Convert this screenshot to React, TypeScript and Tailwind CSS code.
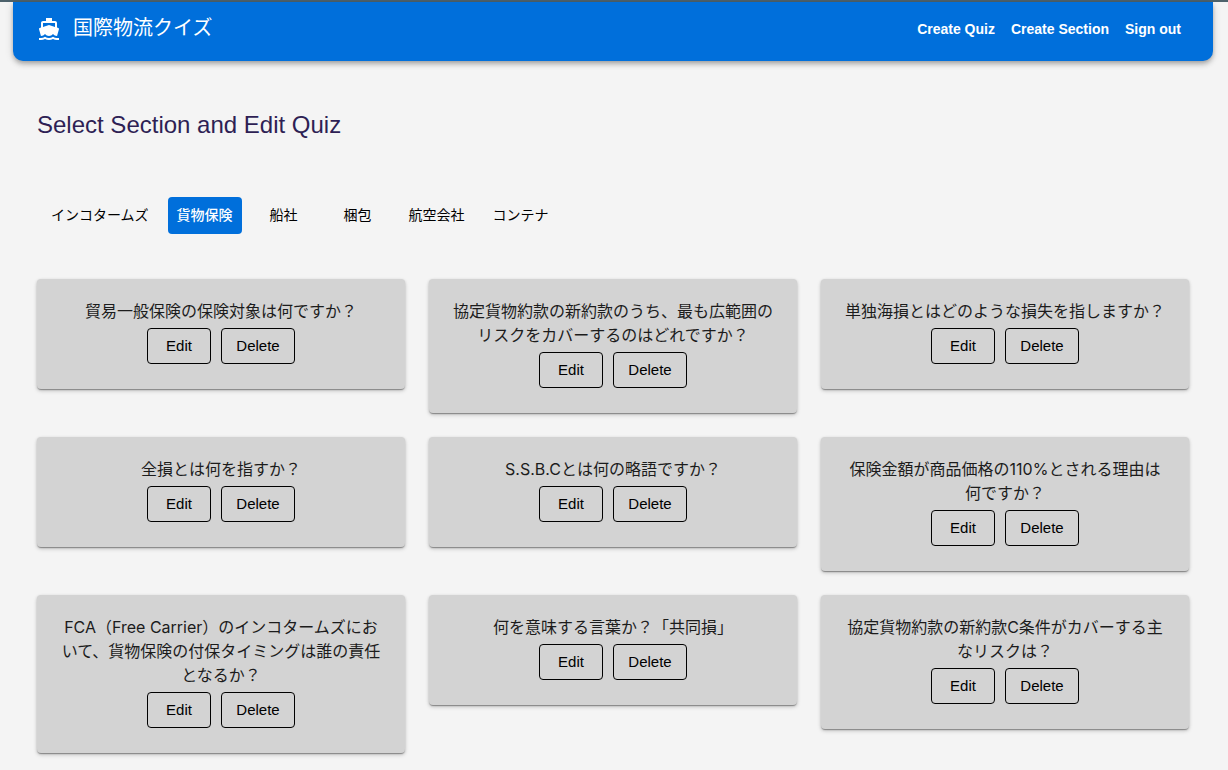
import { MdDirectionsBoat } from "react-icons/md";

const sections = ["インコタームズ", "貨物保険", "船社", "梱包", "航空会社", "コンテナ"];
const activeSection = "貨物保険";

const quizzes = [
  "貿易一般保険の保険対象は何ですか？",
  "協定貨物約款の新約款のうち、最も広範囲のリスクをカバーするのはどれですか？",
  "単独海損とはどのような損失を指しますか？",
  "全損とは何を指すか？",
  "S.S.B.Cとは何の略語ですか？",
  "保険金額が商品価格の110%とされる理由は何ですか？",
  "FCA（Free Carrier）のインコタームズにおいて、貨物保険の付保タイミングは誰の責任となるか？",
  "何を意味する言葉か？「共同損」",
  "協定貨物約款の新約款C条件がカバーする主なリスクは？",
];

function Header() {
  return (
    <header className="flex h-[59px] items-start justify-between rounded-b-[10px] bg-[#006fdb] pl-6 pr-8 text-white shadow-[0_2px_4px_-1px_rgba(0,0,0,0.2),0_4px_5px_rgba(0,0,0,0.14),0_1px_10px_rgba(0,0,0,0.12)]">
      <a href="#home" className="flex items-center gap-3 pt-3">
        <MdDirectionsBoat className="mt-[2px] size-6" aria-hidden="true" />
        <span className="text-xl leading-7">国際物流クイズ</span>
      </a>
      <nav className="flex gap-4 pt-[15px] text-sm leading-6 font-bold">
        <a href="#create-quiz">Create Quiz</a>
        <a href="#create-section">Create Section</a>
        <a href="#sign-out">Sign out</a>
      </nav>
    </header>
  );
}

function SectionTabs() {
  return (
    <div className="mt-14 flex flex-wrap gap-[10px] px-[5px]">
      {sections.map((name) => (
        <button
          key={name}
          type="button"
          aria-pressed={name === activeSection}
          className={
            name === activeSection
              ? "h-[37px] min-w-16 rounded bg-[#006fdb] px-[9px] pb-[2px] text-sm font-medium text-white"
              : "h-[37px] min-w-16 rounded px-[9px] pb-[2px] text-sm text-black"
          }
        >
          {name}
        </button>
      ))}
    </div>
  );
}

function QuizCard({ question }: { question: string }) {
  return (
    <article className="rounded bg-[#d3d3d3] px-6 pt-5 pb-[25px] text-center shadow-[0_2px_1px_-1px_rgba(0,0,0,0.2),0_1px_1px_rgba(0,0,0,0.14),0_1px_3px_rgba(0,0,0,0.12),0_2px_4px_rgba(0,0,0,0.16)]">
      <p className="font-['Inter','Noto_Sans_CJK_JP',sans-serif] text-base leading-6 text-[#1c1c1c]">
        {question}
      </p>
      <div className="mt-[5px] flex justify-center gap-[10px] text-[15px] leading-6 text-black">
        <button type="button" className="h-9 w-16 rounded border border-black">
          Edit
        </button>
        <button type="button" className="h-9 w-[74px] rounded border border-black">
          Delete
        </button>
      </div>
    </article>
  );
}

export default function App() {
  return (
    <div
      lang="ja"
      className="min-h-screen border-t-2 border-[#4d626c] bg-[#f4f4f4] pr-[2px] pb-4 font-['Liberation_Sans','Noto_Sans_CJK_JP',sans-serif]"
    >
      <div className="mx-auto max-w-[1200px]">
        <Header />
        <main className="px-6 pt-12">
          <h1 className="text-2xl leading-8 text-[#2e1f54]">Select Section and Edit Quiz</h1>
          <SectionTabs />
          <div className="mt-[45px] grid grid-cols-3 items-start gap-6">
            {quizzes.map((question) => (
              <QuizCard key={question} question={question} />
            ))}
          </div>
        </main>
      </div>
    </div>
  );
}
